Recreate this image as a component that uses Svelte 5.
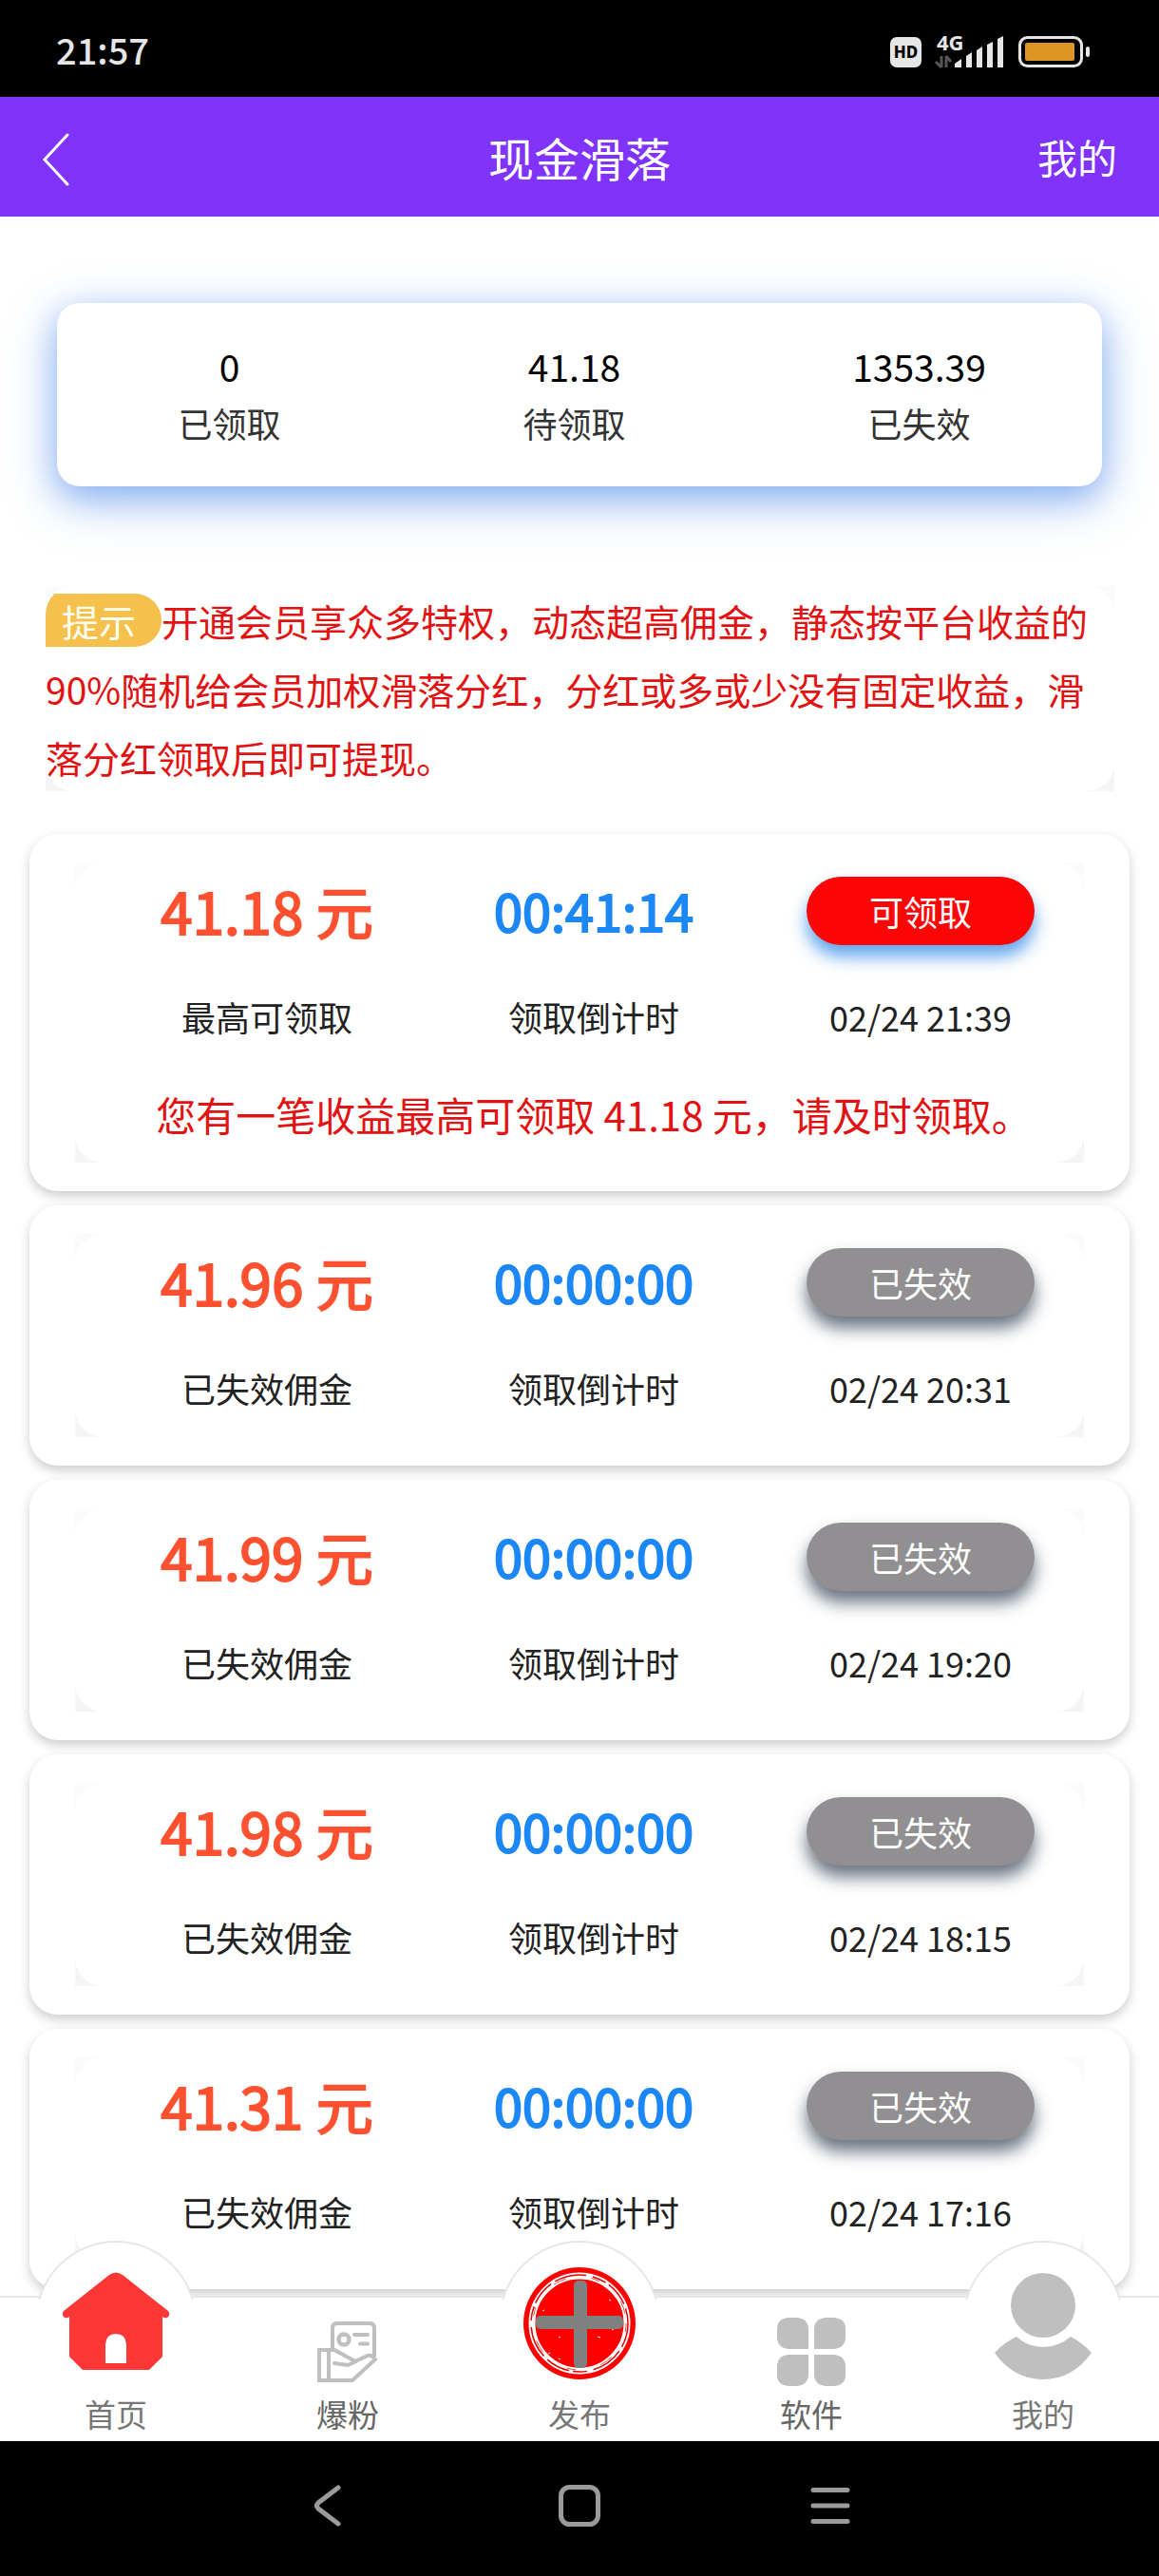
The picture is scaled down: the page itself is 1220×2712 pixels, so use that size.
<script>
  const summary = [
    { value: "0", label: "已领取" },
    { value: "41.18", label: "待领取" },
    { value: "1353.39", label: "已失效" },
  ];

  const records = [
    { amount: "41.18", timer: "00:41:14", date: "02/24 21:39", active: true },
    { amount: "41.96", timer: "00:00:00", date: "02/24 20:31", active: false },
    { amount: "41.99", timer: "00:00:00", date: "02/24 19:20", active: false },
    { amount: "41.98", timer: "00:00:00", date: "02/24 18:15", active: false },
    { amount: "41.31", timer: "00:00:00", date: "02/24 17:16", active: false },
  ];

  const tabs = [
    { id: "home", label: "首页", raised: true },
    { id: "fans", label: "爆粉", raised: false },
    { id: "publish", label: "发布", raised: true },
    { id: "apps", label: "软件", raised: false },
    { id: "mine", label: "我的", raised: true },
  ];
</script>

<div class="page">
  <div class="status">
    <span class="clock">21:57</span>
    <svg class="status-icons" width="212" height="46" viewBox="0 -6 212 46">
      <rect x="2" y="4" width="33" height="32" rx="7" fill="#e6e6e6" />
      <text x="18.5" y="26" text-anchor="middle" font-size="17" font-weight="800" fill="#000">HD</text>
      <text x="51" y="18" font-size="22" font-weight="700" fill="#e6e6e6">4G</text>
      <path d="M56 24v12M56 36l-6-6M61 36V24M61 24l5 6" stroke="#555" stroke-width="3" fill="none" />
      <path
        d="M70 36v-4l7-5v9zM82 36V24l6-4v16zM93 36V18l6-4v22zM104 36V12l6-3v27zM115 36V6l6-3v33z"
        fill="#e6e6e6" />
      <rect x="138.500" y="4.500" width="65" height="30" rx="8" fill="none" stroke="#e6e6e6" stroke-width="3" />
      <rect x="144" y="10" width="52" height="19" rx="2" fill="#dd9623" />
      <rect x="208" y="14" width="4" height="11" rx="2" fill="#e6e6e6" />
    </svg>
  </div>

  <header class="navbar">
    <button class="back" aria-label="返回">
      <svg width="30" height="58" viewBox="0 0 30 58">
        <path d="M27 3L3 29L27 55" fill="none" stroke="#fff" stroke-width="3" stroke-linecap="round" />
      </svg>
    </button>
    <h1>现金滑落</h1>
    <a class="mine" href="#mine">我的</a>
  </header>

  <main>
    <section class="summary">
      {#each summary as item}
        <div class="summary-item">
          <strong>{item.value}</strong>
          <span>{item.label}</span>
        </div>
      {/each}
    </section>

    <div class="frame notice">
      <p class="panel"><span class="tag">提示</span>开通会员享众多特权，动态超高佣金，静态按平台收益的90%随机给会员加权滑落分红，分红或多或少没有固定收益，滑落分红领取后即可提现。</p>
    </div>

    <div class="list">
      {#each records as item}
        <article class="card">
          <div class="frame">
            <div class="panel record">
              <div class="cols">
                <div class="col">
                  <div class="value amount">{item.amount} 元</div>
                  <div class="label">{item.active ? "最高可领取" : "已失效佣金"}</div>
                </div>
                <div class="col">
                  <div class="value timer">{item.timer}</div>
                  <div class="label">领取倒计时</div>
                </div>
                <div class="col">
                  <button class="claim" class:active={item.active}>
                    {item.active ? "可领取" : "已失效"}
                  </button>
                  <div class="label">{item.date}</div>
                </div>
              </div>
              {#if item.active}
                <div class="message">您有一笔收益最高可领取 {item.amount} 元，请及时领取。</div>
              {/if}
            </div>
          </div>
        </article>
      {/each}
    </div>
  </main>

  <footer>
    <nav class="tabbar">
      {#each tabs as tab}
        <a class="tab" class:raised={tab.raised} href="#{tab.id}">
          {#if tab.raised}
            <span class="bump"></span>
          {/if}
          <span class="icon">
            {#if tab.id === "home"}
              <svg width="120" height="120" viewBox="0 0 120 120">
                <path
                  d="M53 9Q60 4 67 9L115 47Q118 51 114 54Q111 55 109 53V95L95 109H25L11 95V53Q9 55 6 54Q2 51 5 47Z"
                  fill="#fd3636" />
                <path d="M49 102V82Q50 71 60 71Q70 71 71 82V102Z" fill="#fff" />
              </svg>
            {:else if tab.id === "fans"}
              <svg width="64" height="66" viewBox="0 0 64 66" fill="none" stroke="#bfbfbf" stroke-width="4">
                <path d="M16 30V8Q16 3 21 3H55Q60 3 60 8V38" />
                <circle cx="28" cy="20" r="5.500" stroke-width="4.500" />
                <path d="M39 15H53M45 24.500H53" stroke-linecap="round" />
                <path d="M2 31H18L40 43L53 37Q58 36 61 41L37 63H2ZM12 31V63" />
                <path d="M18 45L32 47L41 43" stroke-linecap="round" />
              </svg>
            {:else if tab.id === "publish"}
              <svg width="120" height="120" viewBox="0 0 120 120">
                <circle cx="60" cy="60" r="59" fill="#f00" />
                <circle cx="60" cy="60" r="50" fill="none" stroke="#fff" stroke-width="7" />
                <circle
                  cx="60" cy="60" r="51" fill="none" stroke="#e00000" stroke-width="1.500"
                  stroke-dasharray="26 5 34 7 15 4" />
                <circle
                  cx="60" cy="60" r="49" fill="none" stroke="#e00000" stroke-width="0.700"
                  stroke-dasharray="9 31 14 27" />
                <path
                  d="M67 29l1 1M91 35l2 1M21 47l2-1M38 74l2 1M79 74l3 1M27 92l2-1M38 97l2 1M94 66l2 1"
                  stroke="#fff" stroke-width="1" />
                <rect x="54" y="15" width="14" height="92" rx="5" fill="#808080" />
                <rect x="14" y="52" width="92" height="14" rx="5" fill="#808080" />
              </svg>
            {:else if tab.id === "apps"}
              <svg width="72" height="72" viewBox="0 0 72 72" fill="#bfbfbf">
                <path d="M12 0H21Q33 1 33 13V33H12Q0 32 0 20V12Q0 1 12 0Z" />
                <path d="M60 0H51Q39 1 39 13V33H60Q72 32 72 20V12Q72 1 60 0Z" />
                <path d="M12 72H21Q33 71 33 59V39H12Q0 40 0 52V60Q0 71 12 72Z" />
                <path d="M60 72H51Q39 71 39 59V39H60Q72 40 72 52V60Q72 71 60 72Z" />
              </svg>
            {:else}
              <svg width="120" height="120" viewBox="0 0 120 120" fill="#bfbfbf">
                <circle cx="60" cy="41" r="34" />
                <path d="M32 74Q44 85 60 85Q76 85 89 74Q101 80 111 91Q91 119 60 119Q29 119 9 91Q19 80 32 74Z" />
              </svg>
            {/if}
          </span>
          <span class="tab-label">{tab.label}</span>
        </a>
      {/each}
    </nav>

    <div class="system">
      <button aria-label="后退">
        <svg width="44" height="44" viewBox="0 0 44 44">
          <path d="M32 3L11 19Q8 22 11 25L32 41" />
        </svg>
      </button>
      <button aria-label="主屏幕">
        <svg width="44" height="44" viewBox="0 0 44 44">
          <rect x="2.500" y="2.500" width="39" height="39" rx="9" />
        </svg>
      </button>
      <button aria-label="菜单">
        <svg width="44" height="44" viewBox="0 0 44 44">
          <path d="M4 5.500H40M4 22H40M4 38.500H40" />
        </svg>
      </button>
    </div>
  </footer>
</div>

<style>
  :global(body) {
    background: #fff;
  }
  .page {
    display: flex;
    flex-direction: column;
    min-height: 100vh;
    font-family: "Noto Sans CJK SC", sans-serif;
    color: #222;
  }
  button {
    border: 0;
    padding: 0;
    background: none;
    font-family: inherit;
  }
  a {
    color: inherit;
    text-decoration: none;
  }
  svg {
    display: block;
  }

  .status {
    display: flex;
    align-items: center;
    justify-content: space-between;
    box-sizing: border-box;
    height: 102px;
    padding: 2px 73px 0 59px;
    background: #000;
    color: #e6e6e6;
  }
  .clock {
    font-size: 38px;
    font-weight: 500;
    line-height: 60px;
  }
  .status-icons {
    font-family: "Noto Sans", sans-serif;
  }

  .navbar {
    display: grid;
    grid-template-columns: 1fr auto 1fr;
    align-items: center;
    height: 126px;
    padding: 0 44px;
    background: #8033fb;
    color: #fff;
  }
  .back {
    justify-self: start;
    padding-top: 6px;
  }
  .navbar h1 {
    margin: 0;
    font-size: 48px;
    font-weight: 400;
    line-height: 72px;
  }
  .mine {
    justify-self: end;
    font-size: 42px;
    line-height: 60px;
  }

  main {
    flex: 1;
    padding-top: 91px;
  }
  .summary {
    display: flex;
    margin: 0 60px;
    padding: 36px 0 37px;
    border-radius: 24px;
    background: #fff;
    box-shadow: 0 15px 60px rgba(66, 133, 244, 0.25), 0 12px 36px rgba(30, 105, 225, 0.45);
  }
  .summary-item {
    display: flex;
    flex-direction: column;
    width: 33%;
    text-align: center;
    line-height: 60px;
  }
  .summary-item strong {
    font-size: 39px;
    font-weight: 400;
    color: #000;
  }
  .summary-item span {
    font-size: 36px;
    color: #333;
  }

  /* square backing, visible only outside the panel's rounded corners */
  .frame {
    background: linear-gradient(#fbfbfb, #f5f5f5);
  }
  .panel {
    margin: 0;
    border-radius: 30px;
    background: #fff;
  }
  .notice {
    margin: 105px 47px 45px 48px;
  }
  .notice .panel {
    overflow: hidden;
    font-size: 39px;
    line-height: 72px;
    color: #e31212;
  }
  .tag {
    display: inline-block;
    padding: 0 27px 0 17px;
    border-radius: 0 28px 28px 0;
    background: #f6c04d;
    color: #fffff0;
    line-height: 56px;
  }

  .list {
    display: flex;
    flex-direction: column;
    gap: 15px;
    padding: 0 31px;
  }
  .card {
    padding: 30px 48px;
    border-radius: 30px;
    background: #fff;
    box-shadow: 0 5px 12px rgba(0, 0, 0, 0.2);
  }
  .record {
    padding: 15px 0 0 30px;
  }
  .cols {
    display: flex;
    padding-bottom: 25px;
  }
  .col {
    flex: 1;
    display: flex;
    flex-direction: column;
    align-items: center;
    gap: 48px;
  }
  /* the regular weight thickened, so the digits keep their narrow advance */
  .value {
    padding-bottom: 2px;
    line-height: 70px;
    -webkit-text-stroke: 2px currentColor;
  }
  .amount {
    font-size: 60px;
    color: #ff5130;
  }
  .timer {
    font-size: 54px;
    color: #1c87f7;
  }
  .claim {
    width: 240px;
    height: 72px;
    border-radius: 36px;
    background: #918f92;
    box-shadow: 0 12px 18px rgba(43, 56, 76, 0.7);
    color: #fff;
    font-size: 36px;
    line-height: 72px;
  }
  .claim.active {
    background: #fc0505;
    box-shadow: 0 12px 18px rgba(28, 125, 230, 0.7);
  }
  .label {
    font-size: 36px;
    line-height: 54px;
  }
  .message {
    text-align: center;
    font-size: 42px;
    line-height: 102px;
    color: #e31212;
  }

  footer {
    position: sticky;
    bottom: 0;
  }
  .tabbar {
    display: flex;
    height: 151px;
    border-top: 2px solid #e6e6e6;
    background: #fff;
  }
  .tab {
    position: relative;
    flex: 1;
    display: flex;
    flex-direction: column;
    align-items: center;
    justify-content: flex-end;
    padding-bottom: 5px;
    color: #666;
  }
  .raised {
    color: #777;
  }
  .bump {
    position: absolute;
    left: 50%;
    top: -60px;
    width: 170px;
    height: 62px;
    margin-left: -85px;
    overflow: hidden;
  }
  .bump::before {
    content: "";
    display: block;
    box-sizing: border-box;
    height: 170px;
    border: 2px solid #e6e6e6;
    border-radius: 50%;
    background: #fff;
  }
  .icon {
    position: relative;
    display: flex;
    align-items: center;
    justify-content: center;
    height: 72px;
    margin-bottom: 5px;
  }
  .raised .icon {
    height: 120px;
    margin-bottom: 11px;
  }
  .tab-label {
    font-size: 33px;
    line-height: 48px;
  }

  .system {
    display: flex;
    align-items: center;
    justify-content: center;
    gap: 220px;
    box-sizing: border-box;
    height: 142px;
    padding-bottom: 6px;
    background: #000;
  }
  .system svg {
    fill: none;
    stroke: #9b9b9b;
    stroke-width: 5;
    stroke-linecap: round;
  }
</style>
